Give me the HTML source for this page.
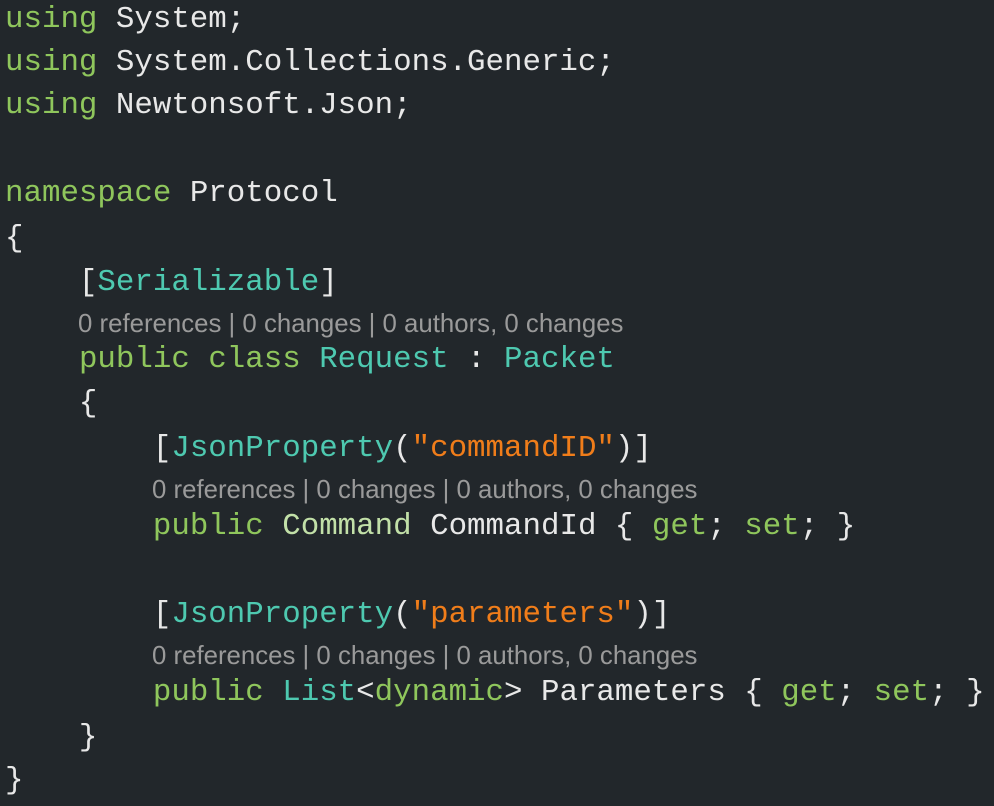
<!DOCTYPE html>
<html><head><meta charset="utf-8"><style>
html,body{margin:0;padding:0;background:#22272b;width:994px;height:806px;overflow:hidden}
.l{position:absolute;left:5px;height:44px;line-height:44px;white-space:pre;font-family:"Liberation Mono",monospace;font-size:30.8px;color:#e8e8e8}
.c{position:absolute;white-space:pre;font-family:"Liberation Sans",sans-serif;font-size:25.8px;letter-spacing:0;color:#9a9a9a;height:30px;line-height:30px}
.k{color:#8fc65c}.t{color:#4ec9b0}.s{color:#f07d1a}.g{color:#c2e0a8}.p{color:#d8d8d8}
</style></head><body>
<div class="l" style="top:-2px"><span class="k">using</span> System;</div>
<div class="l" style="top:41px"><span class="k">using</span> System.Collections.Generic;</div>
<div class="l" style="top:84px"><span class="k">using</span> Newtonsoft.Json;</div>
<div class="l" style="top:172px"><span class="k">namespace</span> Protocol</div>
<div class="l" style="top:217px">{</div>
<div class="l" style="top:261px">    [<span class="t">Serializable</span>]</div>
<div class="c" style="left:78px;top:309px">0 references | 0 changes | 0 authors, 0 changes</div>
<div class="l" style="top:338px">    <span class="k">public</span> <span class="k">class</span> <span class="t">Request</span> : <span class="t">Packet</span></div>
<div class="l" style="top:382px">    {</div>
<div class="l" style="top:427px">        [<span class="t">JsonProperty</span>(<span class="s">"commandID"</span>)]</div>
<div class="c" style="left:152px;top:475px">0 references | 0 changes | 0 authors, 0 changes</div>
<div class="l" style="top:505px">        <span class="k">public</span> <span class="g">Command</span> CommandId { <span class="k">get</span>; <span class="k">set</span>; }</div>
<div class="l" style="top:593px">        [<span class="t">JsonProperty</span>(<span class="s">"parameters"</span>)]</div>
<div class="c" style="left:152px;top:641px">0 references | 0 changes | 0 authors, 0 changes</div>
<div class="l" style="top:671px">        <span class="k">public</span> <span class="t">List</span>&lt;<span class="k">dynamic</span>&gt; Parameters { <span class="k">get</span>; <span class="k">set</span>; }</div>
<div class="l" style="top:716px">    }</div>
<div class="l" style="top:759px">}</div>
</body></html>
